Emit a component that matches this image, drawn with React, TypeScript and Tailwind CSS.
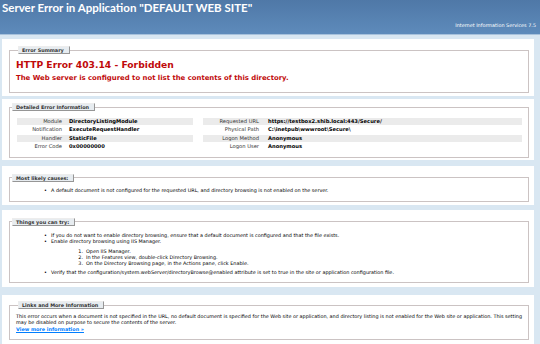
import type { ReactNode } from 'react';

type Row = { label: string; value: string };

const leftRows: Row[] = [
    { label: 'Module', value: 'DirectoryListingModule' },
    { label: 'Notification', value: 'ExecuteRequestHandler' },
    { label: 'Handler', value: 'StaticFile' },
    { label: 'Error Code', value: '0x00000000' },
];

const rightRows: Row[] = [
    { label: 'Requested URL', value: 'https://testbox2.shib.local:443/Secure/' },
    { label: 'Physical Path', value: 'C:\\inetpub\\wwwroot\\Secure\\' },
    { label: 'Logon Method', value: 'Anonymous' },
    { label: 'Logon User', value: 'Anonymous' },
];

const steps = [
    'Open IIS Manager.',
    'In the Features view, double-click Directory Browsing.',
    'On the Directory Browsing page, in the Actions pane, click Enable.',
];

function Legend({ children }: { children: ReactNode }) {
    return (
        <legend className="ml-[2px] h-[8px] pl-[3px] pr-[5px] border border-t-[#ededed] border-l-[#ededed] border-r-[#969696] border-b-[#969696] bg-[#e7ecf0] text-[#333] font-bold leading-[6px]">
            {children}
        </legend>
    );
}

function Bullet({ children }: { children: ReactNode }) {
    return (
        <div className="flex pl-[34px] h-[6.4px] leading-[6.4px] whitespace-nowrap">
            <span className="w-[7px]">•</span>
            <span>{children}</span>
        </div>
    );
}

function DetailTable({ rows, width, labelWidth, labelPad }: { rows: Row[]; width: string; labelWidth: string; labelPad: string }) {
    return (
        <div className={`flex flex-col gap-[1.5px] text-[5.2px] ${width}`}>
            {rows.map((row, i) => (
                <div key={row.label} className={`flex h-[7px] leading-[7px] ${i % 2 === 0 ? 'bg-[#ebebeb]' : ''}`}>
                    <span className={`shrink-0 text-right text-[#333] ${labelWidth} ${labelPad}`}>{row.label}</span>
                    <span className="font-bold whitespace-nowrap">{row.value}</span>
                </div>
            ))}
        </div>
    );
}

export default function App() {
    return (
        <div className="w-[540px] h-[344px] overflow-hidden bg-[#d9e7f2] text-black text-[4.9px] font-['DejaVu_Sans',sans-serif]">
            <div className="h-[35px] flex flex-col bg-gradient-to-b from-[#4f78a7] to-[#5e8bbb] border-b border-[#a8c2dc]">
                <h1 className="pl-[2px] pt-[1px] h-[17px] text-white font-bold text-[11.5px] leading-[14px] font-['Lato',sans-serif]">
                    Server Error in Application "DEFAULT WEB SITE"
                </h1>
                <div className="mt-[5px] pr-[4px] text-right text-white leading-[6px]">
                    Internet Information Services 7.5
                </div>
            </div>

            <div className="flex flex-col ml-[2px] w-[532px]">
                {/* error summary */}
                <div className="mt-[4px] bg-white pt-[7px] pb-[3px] pl-[7px] pr-[5px]">
                    <fieldset className="border border-[#cbc3c3] pl-[6px] pb-[10px]">
                        <Legend>Error Summary</Legend>
                        <h2 className="mt-[6px] text-[9.2px] leading-[9px] font-bold text-[#bf0a0a]">
                            HTTP Error 403.14 - Forbidden
                        </h2>
                        <h3 className="mt-[5px] text-[6.9px] leading-[8px] font-bold text-[#bf0a0a]">
                            The Web server is configured to not list the contents of this directory.
                        </h3>
                    </fieldset>
                </div>

                {/* detailed info */}
                <div className="mt-[3px] bg-white pt-[4px] pb-[2px] pl-[7px] pr-[5px]">
                    <fieldset className="border border-[#cbc3c3] pb-[7px]">
                        <Legend>Detailed Error Information</Legend>
                        <div className="mt-[6.5px] flex gap-[10px] pl-[7px] pr-[6px]">
                            <DetailTable rows={leftRows} width="w-[176px]" labelWidth="w-[52px]" labelPad="pr-[7px]" />
                            <DetailTable rows={rightRows} width="w-[319px]" labelWidth="w-[65px]" labelPad="pr-[9px]" />
                        </div>
                    </fieldset>
                </div>

                {/* causes */}
                <div className="mt-[6px] bg-white pt-[7.5px] pb-[3px] pl-[7px] pr-[5px]">
                    <fieldset className="border border-[#cbc3c3] pb-[7.8px]">
                        <Legend>Most likely causes:</Legend>
                        <div className="mt-[5.3px]">
                            <Bullet>A default document is not configured for the requested URL, and directory browsing is not enabled on the server.</Bullet>
                        </div>
                    </fieldset>
                </div>

                {/* things to try */}
                <div className="mt-[5px] bg-white pt-[8px] pb-[4px] pl-[7px] pr-[5px]">
                    <fieldset className="border border-[#cbc3c3] pb-[6.8px]">
                        <Legend>Things you can try:</Legend>
                        <div className="mt-[5.8px]">
                            <Bullet>If you do not want to enable directory browsing, ensure that a default document is configured and that the file exists.</Bullet>
                            <Bullet>Enable directory browsing using IIS Manager.</Bullet>
                            <div className="mt-[3.2px] mb-[2.6px] pl-[65px]">
                                {steps.map((step, i) => (
                                    <div key={step} className="flex h-[6.2px] leading-[6.2px]">
                                        <span className="w-[8px] text-right">{i + 1}.</span>
                                        <span className="ml-[3px]">{step}</span>
                                    </div>
                                ))}
                            </div>
                            <Bullet>Verify that the configuration/system.webServer/directoryBrowse@enabled attribute is set to true in the site or application configuration file.</Bullet>
                        </div>
                    </fieldset>
                </div>

                {/* links */}
                <div className="mt-[8px] bg-white pt-[6px] pb-[4px] pl-[7px] pr-[5px]">
                    <fieldset className="border border-[#cbc3c3] pl-[6px] pr-[4px] pb-[7px]">
                        <Legend>Links and More Information</Legend>
                        <p className="mt-[3.8px] leading-[6.5px]">
                            This error occurs when a document is not specified in the URL, no default document is specified for the Web site or application, and directory listing is not enabled for the Web site or application. This setting may be disabled on purpose to secure the contents of the server.
                        </p>
                        <a href="#" className="block leading-[6.5px] font-bold text-[#007eff] underline">
                            View more information »
                        </a>
                    </fieldset>
                </div>
            </div>
        </div>
    );
}
